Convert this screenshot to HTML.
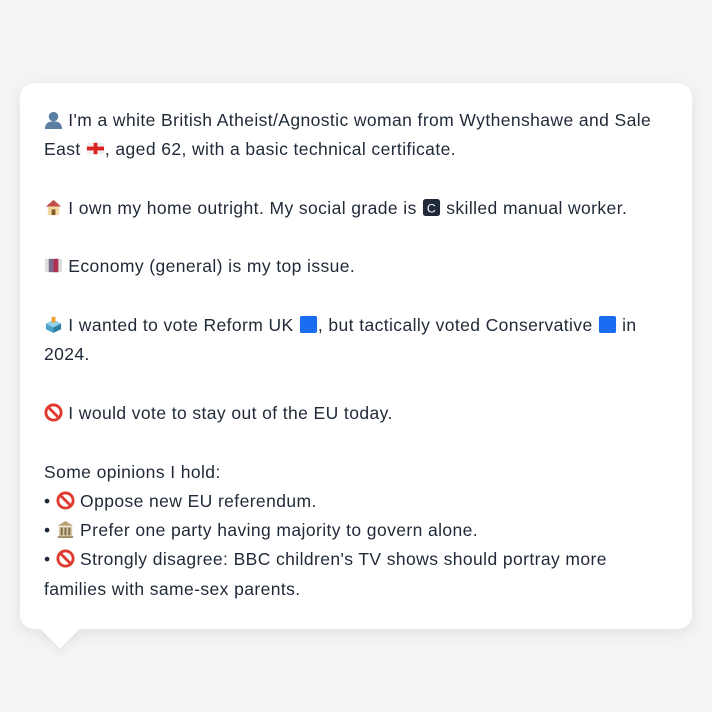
<!DOCTYPE html>
<html><head><meta charset="utf-8"><style>
html,body{margin:0;padding:0;background:#f3f4f6;width:712px;height:712px;overflow:hidden}
.card{position:absolute;left:20px;top:83px;width:672px;height:546px;background:#fff;border-radius:14px;box-shadow:0 4px 14px rgba(0,0,0,0.08)}
.tail{position:absolute;left:46px;top:615px;width:28px;height:28px;background:#fff;transform:rotate(45deg);box-shadow:4px 4px 8px rgba(0,0,0,0.05)}
.txt{position:absolute;left:44px;top:106px;font-family:"Liberation Sans",sans-serif;font-size:17.5px;letter-spacing:0.4px;line-height:29.3px;color:#1f2937;white-space:nowrap}
.e{display:inline-block;width:19px;height:19px;vertical-align:-3px;position:relative}
</style></head><body>
<div class="card"></div><div class="tail"></div>
<div class="txt">
<div><svg class="e" viewBox="0 0 20 20"><circle cx="10" cy="7" r="5" fill="#5b7fa3"/><path d="M1 20 Q1 12 10 12 Q19 12 19 20Z" fill="#5b7fa3"/></svg> I'm a white British Atheist/Agnostic woman from Wythenshawe and Sale</div>
<div>East <svg class="e" viewBox="0 0 20 20"><rect x="1" y="4" width="18" height="12" fill="#eee"/><rect x="8" y="4" width="4" height="12" fill="#d22"/><rect x="1" y="8" width="18" height="4" fill="#d22"/></svg>, aged 62, with a basic technical certificate.</div>
<div>&nbsp;</div>
<div><svg class="e" viewBox="0 0 20 20"><path d="M2 9 L10 2 L18 9Z" fill="#c0504d"/><rect x="4" y="9" width="12" height="9" fill="#f2d9a0"/><rect x="8" y="12" width="4" height="6" fill="#8a5a2b"/></svg> I own my home outright. My social grade is <svg class="e" viewBox="0 0 20 20"><rect x="1" y="1" width="18" height="18" rx="3" fill="#1f2937"/><text x="10" y="15" font-size="13" fill="#fff" text-anchor="middle" font-family="Liberation Sans">C</text></svg> skilled manual worker.</div>
<div>&nbsp;</div>
<div><svg class="e" viewBox="0 0 20 20"><rect x="1" y="3" width="18" height="14" fill="#ddd"/><rect x="5" y="3" width="10" height="14" fill="#7a6a8a"/><rect x="10" y="3" width="5" height="14" fill="#b03050"/></svg> Economy (general) is my top issue.</div>
<div>&nbsp;</div>
<div><svg class="e" viewBox="0 0 20 20"><path d="M2 9 L10 5 L18 9 L10 13Z" fill="#8fd0ea"/><path d="M2 9 L10 13 L10 19 L2 15Z" fill="#4aa3c8"/><path d="M18 9 L10 13 L10 19 L18 15Z" fill="#2d7fa6"/><rect x="8" y="2" width="4" height="6" fill="#f0a030"/></svg> I wanted to vote Reform UK <svg class="e" viewBox="0 0 20 20"><rect x="1" y="1" width="18" height="18" rx="2" fill="#1a6cf0"/></svg>, but tactically voted Conservative <svg class="e" viewBox="0 0 20 20"><rect x="1" y="1" width="18" height="18" rx="2" fill="#1a6cf0"/></svg> in</div>
<div>2024.</div>
<div>&nbsp;</div>
<div><svg class="e" viewBox="0 0 20 20"><circle cx="10" cy="10" r="8" fill="none" stroke="#e03a2f" stroke-width="3"/><line x1="4.5" y1="4.5" x2="15.5" y2="15.5" stroke="#e03a2f" stroke-width="3"/></svg> I would vote to stay out of the EU today.</div>
<div>&nbsp;</div>
<div>Some opinions I hold:</div>
<div>• <svg class="e" viewBox="0 0 20 20"><circle cx="10" cy="10" r="8" fill="none" stroke="#e03a2f" stroke-width="3"/><line x1="4.5" y1="4.5" x2="15.5" y2="15.5" stroke="#e03a2f" stroke-width="3"/></svg> Oppose new EU referendum.</div>
<div>• <svg class="e" viewBox="0 0 20 20"><path d="M2 6 L10 1 L18 6Z" fill="#b8a070"/><rect x="3" y="7" width="14" height="10" fill="#d8c8a0"/><rect x="5" y="8" width="2" height="8" fill="#7a6a4a"/><rect x="9" y="8" width="2" height="8" fill="#7a6a4a"/><rect x="13" y="8" width="2" height="8" fill="#7a6a4a"/><rect x="2" y="17" width="16" height="2" fill="#9a8a60"/></svg> Prefer one party having majority to govern alone.</div>
<div>• <svg class="e" viewBox="0 0 20 20"><circle cx="10" cy="10" r="8" fill="none" stroke="#e03a2f" stroke-width="3"/><line x1="4.5" y1="4.5" x2="15.5" y2="15.5" stroke="#e03a2f" stroke-width="3"/></svg> Strongly disagree: BBC children's TV shows should portray more</div>
<div>families with same-sex parents.</div>
</div>
</body></html>
